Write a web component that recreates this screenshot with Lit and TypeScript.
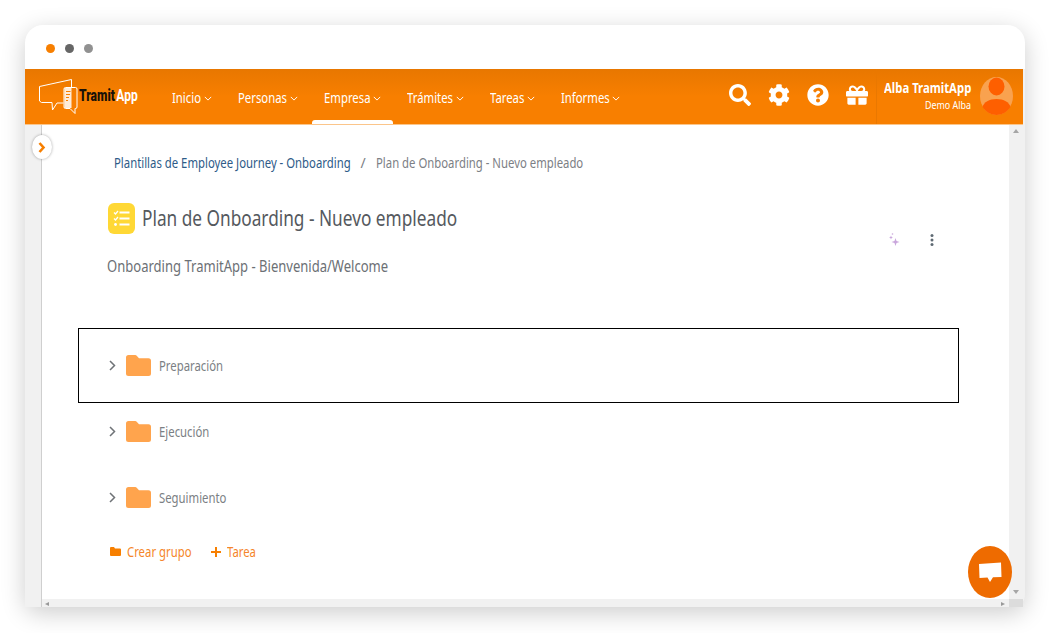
import { LitElement, html, css, svg } from "lit";
import { customElement, property } from "lit/decorators.js";

@customElement("sq-t")
export class SqT extends LitElement {
  @property({ type: Number }) sx = 0.81;
  static styles = css`
    :host { display: inline-block; white-space: nowrap; vertical-align: top; }
    .in { display: inline-block; transform-origin: 0 50%; }
  `;
  render() {
    return html`<span class="in" style="transform:scaleX(${this.sx})"><slot></slot></span>`;
  }
  firstUpdated() {
    const inner = this.renderRoot.querySelector(".in") as HTMLElement;
    this.style.width = `${inner.offsetWidth * this.sx}px`;
  }
}

const chevDown = html`<svg class="cd" viewBox="0 0 10 6"><path d="M1 1l4 4 4-4" fill="none" stroke="currentColor" stroke-width="1.2"/></svg>`;
const folder = html`<svg class="folder" viewBox="0 0 25 21"><path d="M0 2.5A2.5 2.5 0 0 1 2.5 0h6.7a2 2 0 0 1 1.5.7L13 3.2h9.5A2.5 2.5 0 0 1 25 5.700v12.800a2.500 2.500 0 0 1-2.500 2.500h-20A2.500 2.500 0 0 1 0 18.500z" fill="#ffa44d"/></svg>`;
const chevRight = html`<svg class="cr" viewBox="0 0 7 11"><path d="M1 1l4.500 4.500L1 10" fill="none" stroke="#6f7377" stroke-width="1.500"/></svg>`;

const ICONS: Record<string, string> = {
  search: "M505 442.7L405.3 343c-4.5-4.5-10.6-7-17-7H372c27.6-35.3 44-79.7 44-128C416 93.1 322.9 0 208 0S0 93.1 0 208s93.1 208 208 208c48.3 0 92.7-16.4 128-44v16.3c0 6.4 2.5 12.5 7 17l99.7 99.7c9.4 9.4 24.6 9.4 33.9 0l28.3-28.3c9.4-9.4 9.4-24.6.1-34zM208 336c-70.7 0-128-57.2-128-128 0-70.7 57.2-128 128-128 70.7 0 128 57.2 128 128 0 70.7-57.2 128-128 128z",
  cog: "M487.4 315.7l-42.6-24.6c4.3-23.2 4.3-47 0-70.2l42.6-24.6c4.9-2.8 7.1-8.6 5.5-14-11.1-35.6-30-67.8-54.7-94.6-3.8-4.1-10-5.1-14.8-2.3L380.8 110c-17.9-15.4-38.5-27.3-60.8-35.1V25.8c0-5.6-3.9-10.5-9.4-11.7-36.7-8.2-74.3-7.8-109.2 0-5.5 1.2-9.4 6.1-9.4 11.7V75c-22.2 7.9-42.8 19.8-60.8 35.1L88.7 85.5c-4.9-2.8-11-1.9-14.8 2.3-24.7 26.7-43.6 58.9-54.7 94.6-1.7 5.4.6 11.2 5.5 14L67.3 221c-4.3 23.2-4.3 47 0 70.2l-42.6 24.6c-4.9 2.8-7.1 8.6-5.5 14 11.1 35.6 30 67.8 54.7 94.6 3.8 4.1 10 5.1 14.8 2.3l42.6-24.6c17.9 15.4 38.5 27.3 60.8 35.1v49.2c0 5.6 3.9 10.5 9.4 11.7 36.7 8.2 74.3 7.8 109.2 0 5.5-1.2 9.4-6.1 9.4-11.7v-49.2c22.2-7.9 42.8-19.8 60.8-35.1l42.6 24.6c4.9 2.8 11 1.9 14.8-2.3 24.7-26.7 43.6-58.9 54.7-94.6 1.5-5.5-.7-11.3-5.6-14.1zM256 336c-44.1 0-80-35.9-80-80s35.9-80 80-80 80 35.9 80 80-35.9 80-80 80z",
  help: "M504 256c0 136.997-111.043 248-248 248S8 392.997 8 256C8 119.083 119.043 8 256 8s248 111.083 248 248zM262.655 90c-54.497 0-89.255 22.957-116.549 63.758-3.536 5.286-2.353 12.415 2.715 16.258l34.699 26.31c5.205 3.947 12.621 3.008 16.665-2.122 17.864-22.658 30.113-35.797 57.303-35.797 20.429 0 45.698 13.148 45.698 32.958 0 14.976-12.363 22.667-32.534 33.976C247.128 238.528 216 254.941 216 296v4c0 6.627 5.373 12 12 12h56c6.627 0 12-5.373 12-12v-1.333c0-28.462 83.186-29.647 83.186-106.667 0-58.002-60.165-102-116.531-102zM256 338c-25.365 0-46 20.635-46 46 0 25.364 20.635 46 46 46s46-20.636 46-46c0-25.365-20.635-46-46-46z",
  gift: "M32 448c0 17.7 14.3 32 32 32h160V320H32v128zm256 32h160c17.7 0 32-14.3 32-32V320H288v160zm192-320h-42.1c6.2-12.1 10.1-25.5 10.1-40 0-48.5-39.5-88-88-88-41.6 0-68.5 21.3-103 68.3-34.5-47-61.4-68.3-103-68.3-48.500 0-88 39.500-88 88 0 14.500 3.800 27.900 10.100 40H32c-17.700 0-32 14.300-32 32v80c0 8.800 7.200 16 16 16h480c8.800 0 16-7.200 16-16v-80c0-17.700-14.300-32-32-32zm-326.100 0c-22.100 0-40-17.900-40-40s17.900-40 40-40c19.900 0 34.600 3.300 86.100 80h-86.100zm206.100 0h-86.100c51.400-76.500 65.700-80 86.100-80 22.100 0 40 17.900 40 40s-17.900 40-40 40z",
};

const NAV = ["Inicio", "Personas", "Empresa", "Trámites", "Tareas", "Informes"];

@customElement("app-root")
export class AppRoot extends LitElement {
  static styles = css`
    :host { display: block; height: 633px; overflow: hidden; background: #fff; font-family: "Noto Sans", "Open Sans", sans-serif; }
    .window { position: relative; width: 1000px; height: 582px; margin: 25px 0 0 25px; border-radius: 18px 18px 12px 12px; background: #f1f1f1; box-shadow: 0 6px 24px rgba(0,0,0,.2); display: flex; flex-direction: column; }
    .bar { height: 44px; background: #fff; border-radius: 18px 18px 0 0; display: flex; align-items: center; gap: 10px; padding-left: 21px; box-sizing: border-box; flex: none; }
    .bar i { width: 9px; height: 9px; border-radius: 50%; margin-top: 3px; }
    .nav { height: 55.5px; width: 998px; display: flex; align-items: stretch; background: linear-gradient(#e87700, #f87f00 50%); border-bottom: 1px solid #fbc58a; box-sizing: border-box; flex: none; color: #fff; }
    .logo { width: 135px; flex: none; display: flex; align-items: center; padding-left: 14px; box-sizing: border-box; position: relative; }
    .logo svg { width: 42px; height: 36px; flex: none; margin-top: 1px; }
    .logotext { font-family: "Roboto", sans-serif; font-weight: 700; font-size: 16.500px; transform: scaleX(.73); transform-origin: left center; white-space: nowrap; margin-left: -2px; margin-top: -1px; }
    .logotext b { color: #1a1208; font-weight: 900; margin-right: -2px; }
    .menu { display: flex; margin: 0; padding: 0; list-style: none; }
    .menu span.item { display: flex; align-items: center; gap: 3px; padding: 0 11.800px 0 12px; margin-right: 2px; font-size: 14px; position: relative; height: 100%; padding-top: 3px; box-sizing: border-box; }
    .cd { width: 8px; height: 5px; margin-top: 1px; }
    .item.on::after { content: ""; position: absolute; left: 0; right: 0; bottom: 0; height: 4px; background: #fff; border-radius: 3px 3px 0 0; }
    .spacer { flex: 1; }
    .icons { display: flex; align-items: center; gap: 17px; padding-right: 8px; padding-bottom: 2px; border-right: 1px solid #ea7800; }
    .icons svg { width: 22px; height: 22px; fill: #fff; display: block; }
    .user { display: flex; align-items: center; }
    .who { margin-left: 7px; display: flex; flex-direction: column; align-items: flex-end; gap: 3px; }
    .who b { font-size: 14px; font-weight: 700; line-height: 14px; }
    .who small { font-size: 11px; line-height: 13px; }
    .avatar { width: 33px; height: 38px; margin: 0 10px 1px 9px; display: block; }

    .body { flex: 1; display: flex; min-height: 0; border-radius: 0 0 12px 12px; }
    .gutter { width: 16px; flex: none; border-right: 1px solid #cfcfcf; background: #f1f1f1; }
    .col { flex: 1; min-width: 0; display: flex; flex-direction: column; background: #fff; }
    .main { flex: 1; min-height: 0; padding: 28px 50px 0 36px; box-sizing: border-box; }
    .vs { width: 14px; flex: none; background: #f1f1f1; display: flex; flex-direction: column; margin-right: 2px; }
    .track { flex: 1; display: flex; flex-direction: column; justify-content: space-between; align-items: center; padding: 4px 0 5px; box-sizing: border-box; }
    .corner { height: 8px; background: #dcdcdc; flex: none; }
    .up { width: 0; height: 0; border: 3.500px solid transparent; border-top: 0; border-bottom: 4px solid #a6a6a6; }
    .down { width: 0; height: 0; border: 3.500px solid transparent; border-bottom: 0; border-top: 4px solid #a6a6a6; }
    .hs { height: 8px; background: #f1f1f1; flex: none; position: relative; }
    .hl { position: absolute; left: 3px; top: 3px; width: 0; height: 0; border: 2.500px solid transparent; border-left: 0; border-right: 4px solid #999; }
    .hr { position: absolute; right: 4px; top: 3px; width: 0; height: 0; border: 2.500px solid transparent; border-right: 0; border-left: 4px solid #999; }

    .crumbs { display: flex; align-items: center; font-size: 14px; line-height: 18px; padding-left: 36px; color: #7c8085; margin-top: 1px; }
    .crumbs a { color: #2e5b88; }
    .crumbs s { text-decoration: none; margin: 0 10px; }
    .head { display: flex; margin-top: 31px; padding-left: 30px; }
    .heading { flex: 1; }
    .ttl { display: flex; align-items: center; gap: 7px; }
    .badge { width: 27px; height: 31px; border-radius: 6px; background: #ffd835; flex: none; display: block; }
    h1 { margin: -2px 0 0; font-weight: 400; font-size: 22px; line-height: 28px; color: #55595e; white-space: nowrap; }
    .sub { font-size: 16.500px; line-height: 20px; color: #6c7075; margin: 22px 0 0 -1px; }
    .acts { display: flex; align-items: center; gap: 29px; height: 18px; margin: 28px 25px 0 0; }
    .acts svg { display: block; }
    .rows { margin-top: 52px; }
    .row { height: 66px; display: flex; align-items: center; padding-left: 31px; box-sizing: border-box; font-size: 14px; color: #7b7f84; }
    .row.sel { outline: 1px solid #000; outline-offset: -1px; height: 75px; width: 881px; margin-bottom: -4px; }
    .cr { width: 7px; height: 11px; margin-right: 10px; }
    .folder { width: 25px; height: 21px; margin-right: 8px; }
    .tools { display: flex; align-items: center; font-size: 14px; color: #f5862a; padding-left: 32px; margin-top: 12px; line-height: 18px; }
    .tools svg { display: block; margin-right: 6px; }
    .tools span { display: flex; align-items: center; margin-right: 19px; }
    .toggle { position: absolute; left: 7px; top: 110px; width: 20px; height: 24px; border-radius: 50%; background: #fff; box-shadow: 0 0 3px rgba(0,0,0,.35); display: flex; align-items: center; justify-content: center; }
    .chat { position: absolute; left: 943px; top: 521px; width: 44px; height: 52px; border-radius: 50%; background: #ee6b00; display: flex; align-items: center; justify-content: center; }
  `;

  private ico(name: string) {
    return html`<svg viewBox="0 0 512 512">${svg`<path d=${ICONS[name]}/>`}</svg>`;
  }

  render() {
    return html`
      <div class="window">
        <div class="bar"><i style="background:#f77f00"></i><i style="background:#666"></i><i style="background:#919191"></i></div>
        <div class="nav">
          <div class="logo">
            <svg viewBox="0 0 42 36" fill="none" stroke="#fff" stroke-width="1">
              <path d="M32.500 8V.500L.500 7.500V22L2.500 23.500H13L13.500 31L18 24H24.500" stroke-linejoin="round"/>
              <path d="M26.500 8.500h10a1.500 1.500 0 0 1 1.500 1.500V28a1.500 1.500 0 0 1-1.500 1.500H36V34.500l-5-5h-4.500A1.500 1.500 0 0 1 25 28V10a1.500 1.500 0 0 1 1.500-1.500z"/>
              <rect x="25.500" y="9" width="7" height="20" fill="#fff" fill-opacity=".85" stroke="none"/>
              <path d="M27 12.500h4.500M27 15.500h4M27 18.500h3M27 21.500h2" stroke-width="1.100" stroke="#f87f00"/>
            </svg>
            <div class="logotext"><b>Tramit</b> App</div>
          </div>
          <div class="menu">
            ${NAV.map((n, i) => html`<span class="item ${i === 2 ? "on" : ""}"><sq-t>${n}</sq-t>${chevDown}</span>`)}
          </div>
          <div class="spacer"></div>
          <div class="icons">
            ${this.ico("search")}${this.ico("cog")}${this.ico("help")}${this.ico("gift")}
          </div>
          <div class="user">
            <div class="who"><b><sq-t>Alba TramitApp</sq-t></b><small><sq-t>Demo Alba</sq-t></small></div>
            <svg class="avatar" viewBox="0 0 33 38">
              <ellipse cx="16.500" cy="19" rx="16.500" ry="19" fill="#f9a24f"/>
              <ellipse cx="16.500" cy="9.500" rx="8" ry="9" fill="#fe5f00"/>
              <path d="M2.500 30C4 25 9 22 16.500 22S29 25 30.500 30C27 35 22 38 16.500 38S6 35 2.500 30z" fill="#fe5f00"/>
            </svg>
          </div>
        </div>
        <div class="body">
          <div class="gutter"></div>
          <div class="col">
            <div class="main">
              <div class="crumbs"><a><sq-t>Plantillas de Employee Journey - Onboarding</sq-t></a><s>/</s><span><sq-t>Plan de Onboarding - Nuevo empleado</sq-t></span></div>
              <div class="head">
                <div class="heading">
                  <div class="ttl">
                    <svg class="badge" viewBox="0 0 27 31" fill="none" stroke="#fff" stroke-width="2">
                      <path d="M11.500 9.500h10M11.500 15.500h10M11.500 21.500h10"/>
                      <path d="M6 9.500l1.500 1.500 2.500-3M6 15.500l1.500 1.500 2.500-3" stroke-width="1.300"/>
                      <circle cx="7.500" cy="21.500" r="1.400" fill="#fff" stroke="none"/>
                    </svg>
                    <h1><sq-t sx="0.784">Plan de Onboarding - Nuevo empleado</sq-t></h1>
                  </div>
                  <div class="sub"><sq-t sx="0.79">Onboarding TramitApp - Bienvenida/Welcome</sq-t></div>
                </div>
                <div class="acts">
                  <svg width="13" height="14" viewBox="0 0 13 14" fill="#c9a6dc"><path d="M7.500 5l1 3 3 1-3 1-1 3-1-3-3-1 3-1zM3 2.500l.6 1.400L5 4.500l-1.400.6L3 6.500l-.6-1.400L1 4.500l1.400-.6z"/><circle cx="4.500" cy="1" r=".8"/></svg>
                  <svg width="4" height="12" viewBox="0 0 4 12" fill="#5f6a73"><circle cx="2" cy="1.500" r="1.500"/><circle cx="2" cy="6" r="1.500"/><circle cx="2" cy="10.500" r="1.500"/></svg>
                </div>
              </div>
              <div class="rows">
                ${["Preparación", "Ejecución", "Seguimiento"].map((t, i) => html`<div class="row ${i === 0 ? "sel" : ""}">${chevRight}${folder}<sq-t>${t}</sq-t></div>`)}
              </div>
              <div class="tools">
                <span><svg width="11" height="9" viewBox="0 0 11 9" fill="#f77f00"><path d="M0 1a1 1 0 0 1 1-1h3l1 1.500h5a1 1 0 0 1 1 1V8a1 1 0 0 1-1 1H1a1 1 0 0 1-1-1z"/></svg><sq-t>Crear grupo</sq-t></span>
                <span><svg width="10" height="10" viewBox="0 0 10 10" fill="#f77f00"><path d="M4 0h2v4h4v2H6v4H4V6H0V4h4z"/></svg><sq-t>Tarea</sq-t></span>
              </div>
            </div>
            <div class="hs"><div class="hl"></div><div class="hr"></div></div>
          </div>
          <div class="vs"><div class="track"><div class="up"></div><div class="down"></div></div><div class="corner"></div></div>
        </div>
        <div class="toggle"><svg width="8" height="11" viewBox="0 0 8 11"><path d="M1.500 1l4 4.500-4 4.500" fill="none" stroke="#f77f00" stroke-width="2.600"/></svg></div>
        <div class="chat"><svg width="24" height="22" viewBox="0 0 24 22" fill="#fff"><path d="M1 3l22-1.500.5 14.500-8.500.3L12 21l-2.500-4.500-8 .5z"/></svg></div>
      </div>
    `;
  }
}
